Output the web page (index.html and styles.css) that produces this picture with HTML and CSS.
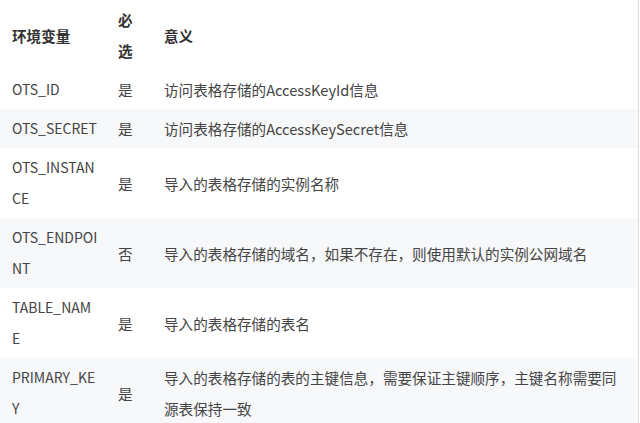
FILE: index.html
```html
<!DOCTYPE html>
<html lang="zh-CN">
<head>
    <meta charset="UTF-8">
    <meta name="viewport" content="width=device-width, initial-scale=1.0">
    <title>环境变量</title>
    <link rel="stylesheet" href="styles.css">
</head>
<body>
    <!-- Environment variable table -->
    <table class="env-table">
        <colgroup>
            <col class="col-name">
            <col class="col-required">
            <col class="col-desc">
        </colgroup>
        <thead>
            <tr>
                <th>环境变量</th>
                <th>必选</th>
                <th>意义</th>
            </tr>
        </thead>
        <tbody>
            <tr>
                <td class="var-name">OTS_ID</td>
                <td>是</td>
                <td>访问表格存储的AccessKeyId信息</td>
            </tr>
            <tr>
                <td class="var-name">OTS_SECRET</td>
                <td>是</td>
                <td>访问表格存储的AccessKeySecret信息</td>
            </tr>
            <tr>
                <td class="var-name">OTS_INSTANCE</td>
                <td>是</td>
                <td>导入的表格存储的实例名称</td>
            </tr>
            <tr>
                <td class="var-name">OTS_ENDPOINT</td>
                <td>否</td>
                <td>导入的表格存储的域名，如果不存在，则使用默认的实例公网域名</td>
            </tr>
            <tr>
                <td class="var-name">TABLE_NAME</td>
                <td>是</td>
                <td>导入的表格存储的表名</td>
            </tr>
            <tr>
                <td class="var-name">PRIMARY_KEY</td>
                <td>是</td>
                <td>导入的表格存储的表的主键信息，需要保证主键顺序，主键名称需要同源表保持一致</td>
            </tr>
        </tbody>
    </table>
</body>
</html>
```

FILE: styles.css
```css
/* General styling */
body {
    margin: 0;
    background-color: #ffffff;
    font-family: 'Noto Sans CJK SC', sans-serif;
    font-size: 14.6px;
    color: #444;
    overflow: hidden;
}

.env-table {
    width: 639px;
    table-layout: fixed;
    border-collapse: collapse;
    border-right: 1px solid #dcdcdc;
}

.col-name {
    width: 106px;
}

.col-required {
    width: 46px;
}

th,
td {
    padding: 4px 12px;
    line-height: 31px;
    text-align: left;
    vertical-align: middle;
    word-break: break-all;
}

th {
    font-weight: bold;
    color: #333;
}

/* Variable names are set a touch narrower so they wrap like the original */
.var-name {
    font-size: 14px;
    padding-right: 8px;
}

/* Striped rows */
tbody tr:nth-child(even) {
    background-color: #f7f8fa;
}
```
